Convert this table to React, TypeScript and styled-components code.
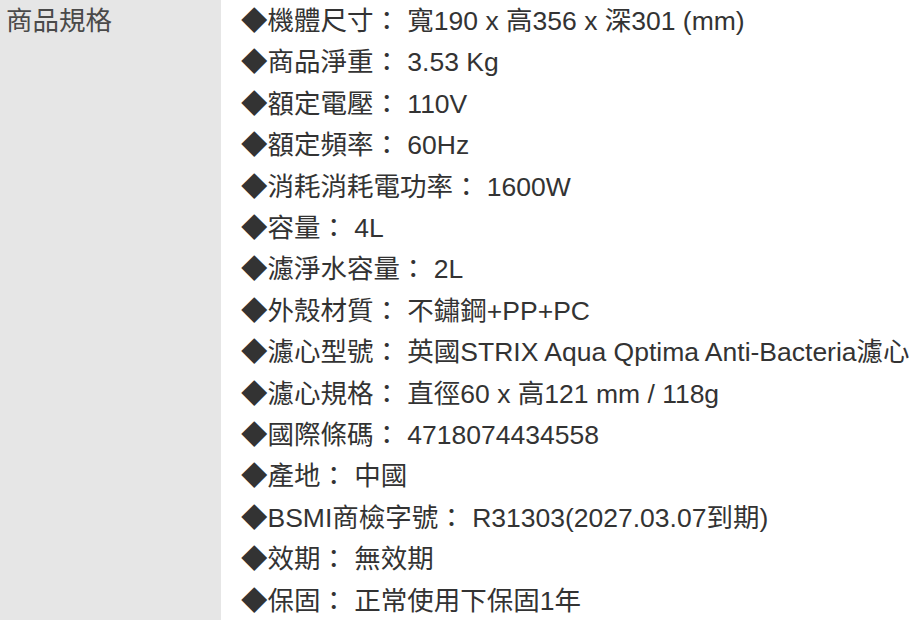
import React from "react";
import styled, { createGlobalStyle } from "styled-components";

const Global = createGlobalStyle`
  html, body { margin: 0; padding: 0; background: #ffffff; }
  body { font-family: "Liberation Sans", "Noto Sans CJK TC", sans-serif; }
`;

const SpecTable = styled.div`
  display: grid;
  grid-template-columns: 221px 1fr;
  width: 920px;
  height: 620px;
  overflow: hidden;
  font-family: "Liberation Sans", "Noto Sans CJK TC", sans-serif;
  font-size: 26.5px;
  line-height: 41.4px;
  color: #333333;
`;

const LabelCell = styled.div`
  background: #e6e6e6;
  color: #4a4a4a;
  padding: 1px 0 0 6px;
`;

const ValueCell = styled.ul`
  list-style: none;
  margin: 0;
  padding: 1px 0 0 20px;
  white-space: nowrap;
`;

const SpecItem = styled.li`
  margin: 0;
  padding: 0;
`;

const specs = [
  "◆機體尺寸： 寬190 x 高356 x 深301 (mm)",
  "◆商品淨重： 3.53 Kg",
  "◆額定電壓： 110V",
  "◆額定頻率： 60Hz",
  "◆消耗消耗電功率： 1600W",
  "◆容量： 4L",
  "◆濾淨水容量： 2L",
  "◆外殼材質： 不鏽鋼+PP+PC",
  "◆濾心型號： 英國STRIX Aqua Qptima Anti-Bacteria濾心",
  "◆濾心規格： 直徑60 x 高121 mm / 118g",
  "◆國際條碼： 4718074434558",
  "◆產地： 中國",
  "◆BSMI商檢字號： R31303(2027.03.07到期)",
  "◆效期： 無效期",
  "◆保固： 正常使用下保固1年",
];

export default function App() {
  return (
    <>
      <Global />
      <SpecTable>
        <LabelCell>商品規格</LabelCell>
        <ValueCell>
          {specs.map((s) => (
            <SpecItem key={s}>{s}</SpecItem>
          ))}
        </ValueCell>
      </SpecTable>
    </>
  );
}
